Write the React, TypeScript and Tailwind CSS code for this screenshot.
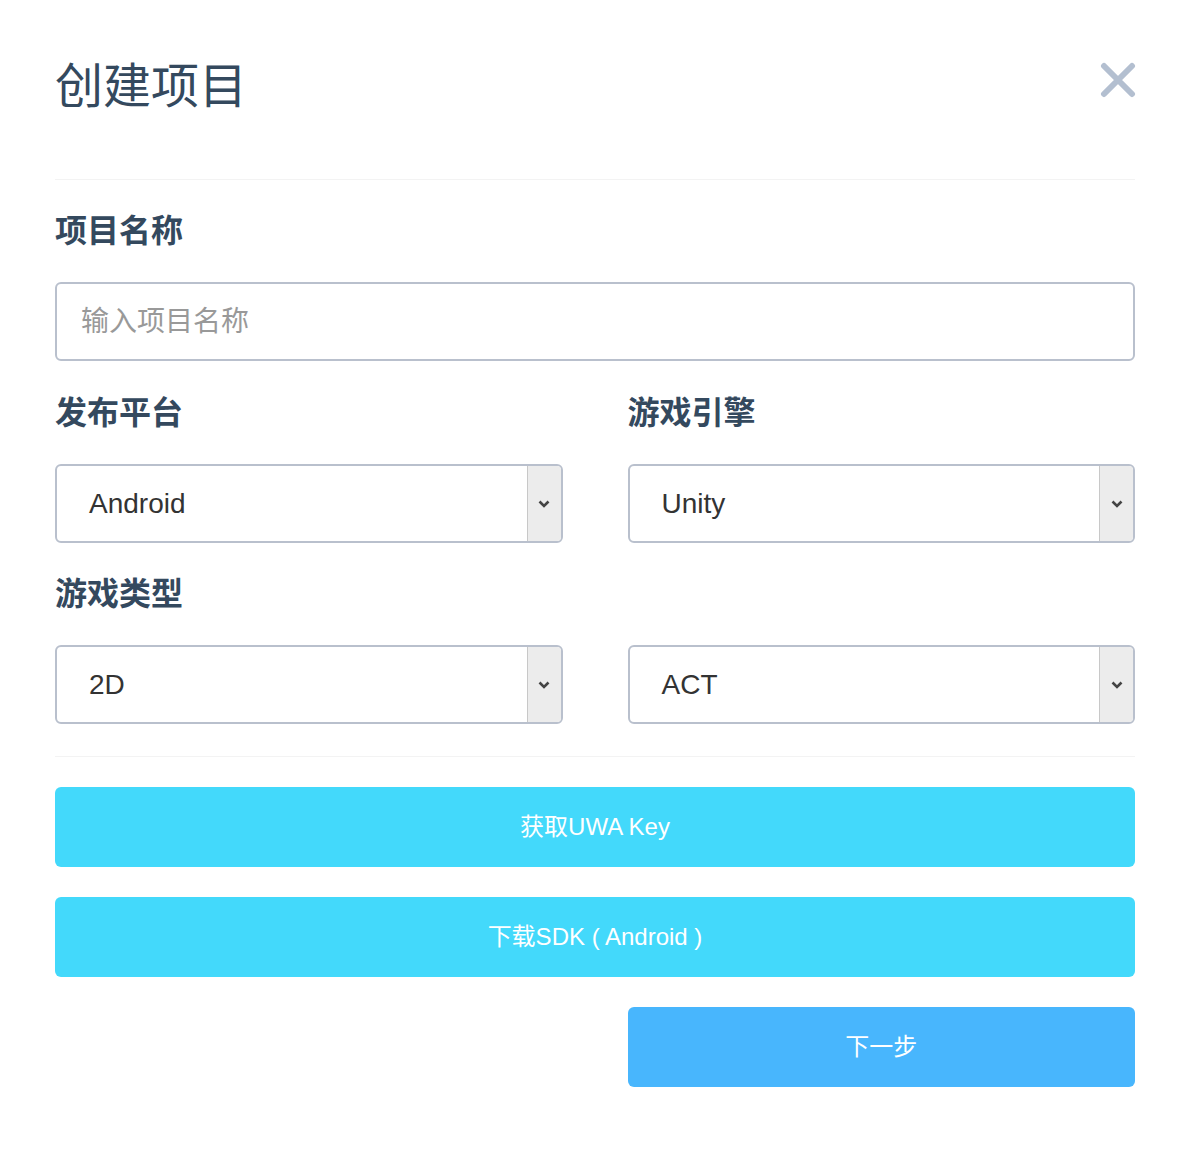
const font = { fontFamily: '"Liberation Sans", "Noto Sans CJK SC", sans-serif' }

function Select({ value }: { value: string }) {
  return (
    <div className="flex h-[79px] rounded-md border-2 border-[#b9c0cd] overflow-hidden bg-white">
      <div className="flex-1 flex items-center pl-[32px] text-[28px] text-[#333]">{value}</div>
      <div className="w-[34px] flex items-center justify-center bg-[#ececec] border-l border-[#c8c8c8]">
        <svg width="14" height="10" viewBox="0 0 14 10">
          <path d="M2.5 2.5 L7 7 L11.5 2.5" fill="none" stroke="#444" strokeWidth="2.6" />
        </svg>
      </div>
    </div>
  )
}

function Label({ children }: { children: string }) {
  return <div className="h-[40px] leading-[40px] text-[32px] font-bold text-[#34495e]">{children}</div>
}

export default function App() {
  return (
    <div className="min-h-screen bg-white px-[55px] pt-[50px]" style={font}>
      <div className="flex items-center justify-between h-[74px]">
        <h1 className="text-[48px] leading-[74px] text-[#34495e] font-normal">创建项目</h1>
        <svg width="36" height="36" viewBox="0 0 36 36" className="-mt-[14px] -mr-[1px]">
          <path d="M4 4 L32 32 M32 4 L4 32" stroke="#b3bfd0" strokeWidth="6" strokeLinecap="round" />
        </svg>
      </div>
      <div className="mt-[55px] h-px bg-[#f3f3f3]" />

      <div className="mt-[31px]">
        <Label>项目名称</Label>
        <input
          placeholder="输入项目名称"
          className="mt-[31px] w-full h-[79px] rounded-md border-2 border-[#b9c0cd] px-[24px] text-[28px] text-[#333] placeholder:text-[#999] outline-none"
        />
      </div>

      <div className="mt-[32px] grid grid-cols-2 gap-x-[65px]">
        <div>
          <Label>发布平台</Label>
          <div className="mt-[31px]">
            <Select value="Android" />
          </div>
        </div>
        <div>
          <Label>游戏引擎</Label>
          <div className="mt-[31px]">
            <Select value="Unity" />
          </div>
        </div>
      </div>

      <div className="mt-[31px]">
        <Label>游戏类型</Label>
        <div className="mt-[31px] grid grid-cols-2 gap-x-[65px]">
          <Select value="2D" />
          <Select value="ACT" />
        </div>
      </div>

      <div className="mt-[32px] h-px bg-[#f3f3f3]" />

      <button className="mt-[30px] w-full h-[80px] rounded-md bg-[#43d9fb] text-white text-[24px]">获取UWA Key</button>
      <button className="mt-[30px] w-full h-[80px] rounded-md bg-[#43d9fb] text-white text-[24px]">下载SDK ( Android )</button>
      <div className="mt-[30px] grid grid-cols-2 gap-x-[65px]">
        <div />
        <button className="h-[80px] rounded-md bg-[#48b6fd] text-white text-[24px]">下一步</button>
      </div>
    </div>
  )
}
